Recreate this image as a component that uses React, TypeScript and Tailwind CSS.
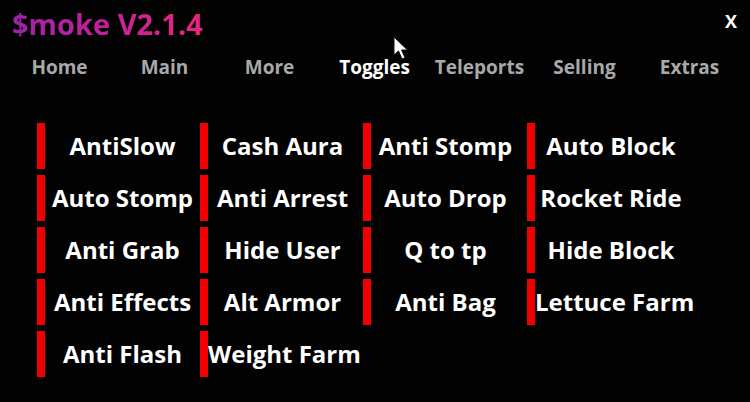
import React from "react";

const font = { fontFamily: '"Open Sans", "Noto Sans", sans-serif' };

const tabs = [
  { name: "Home", active: false },
  { name: "Main", active: false },
  { name: "More", active: false },
  { name: "Toggles", active: true },
  { name: "Teleports", active: false },
  { name: "Selling", active: false },
  { name: "Extras", active: false },
];

const cols = [
  ["AntiSlow", "Auto Stomp", "Anti Grab", "Anti Effects", "Anti Flash"],
  ["Cash Aura", "Anti Arrest", "Hide User", "Alt Armor", "Weight Farm"],
  ["Anti Stomp", "Auto Drop", "Q to tp", "Anti Bag"],
  ["Auto Block", "Rocket Ride", "Hide Block", "Lettuce Farm"],
];

const colCls = ["w-[163px]", "w-[163px]", "w-[164px]", "w-[160px]"];
const padCls = ["pr-0", "pr-[6px]", "pr-[7px]", "pr-0"];

function Cursor() {
  return (
    <svg
      className="absolute left-[393px] top-[36px]"
      width="18"
      height="26"
      viewBox="0 0 18 26"
    >
      <path
        d="M1 1 L1 19 L5.5 15 L9 23 L12 21.8 L8.6 14 L14.5 14 Z"
        fill="#ffffff"
        stroke="#111"
        strokeWidth="1"
      />
    </svg>
  );
}

export default function App() {
  return (
    <div
      className="relative w-[750px] h-[402px] bg-[#020202] overflow-hidden flex flex-col"
      style={font}
    >
      <div className="flex items-start justify-between h-[50px]">
        <div className="pl-[12px] pt-[4px] text-[29px] font-bold leading-[40px] bg-gradient-to-r from-[#9a1fae] via-[#c21f9a] to-[#ea2280] bg-clip-text text-transparent">
          $moke V2.1.4
        </div>
        <div className="pr-[13px] pt-[9px] text-[18px] font-bold text-white leading-[24px]">
          X
        </div>
      </div>
      <div className="flex pl-[7px] h-[34px] items-center">
        {tabs.map((t) => (
          <div
            key={t.name}
            className={`w-[105px] text-center text-[19px] font-bold leading-[24px] ${
              t.active ? "text-white" : "text-[#a9a9a9]"
            }`}
          >
            {t.name}
          </div>
        ))}
      </div>
      <div className="flex pl-[37px] pt-[39px]">
        {cols.map((col, ci) => (
          <div key={ci} className={`${colCls[ci]} flex flex-col gap-[6px]`}>
            {col.map((item) => (
              <div key={item} className="flex items-center h-[46px]">
                <div className="w-[8px] h-[46px] bg-[#f00000] shrink-0" />
                <div
                  className={`flex-1 text-center text-[24px] font-bold text-white whitespace-nowrap leading-[30px] ${padCls[ci]}`}
                >
                  {item}
                </div>
              </div>
            ))}
          </div>
        ))}
      </div>
      <Cursor />
    </div>
  );
}
